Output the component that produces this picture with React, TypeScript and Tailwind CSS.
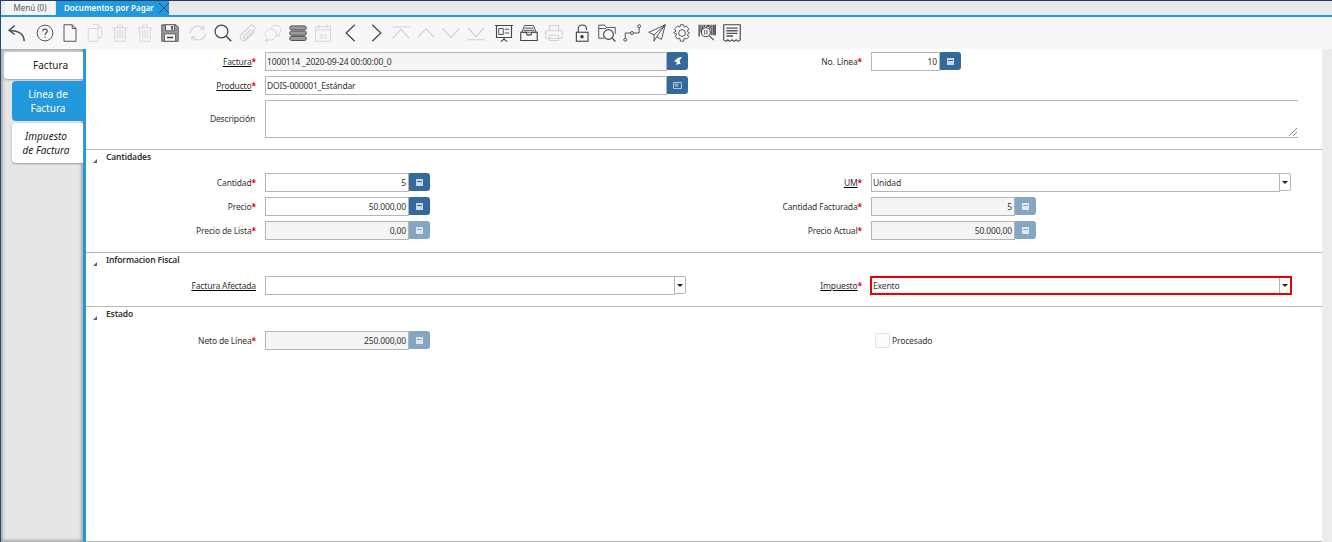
import type { ReactNode } from "react";

const font = "font-['Noto_Sans','Open_Sans',sans-serif]";
const small = "text-[8.5px] tracking-[-0.15px]";

function Icon({ children, off }: { children: ReactNode; off?: boolean }) {
  return (
    <div className="flex h-[25px] w-[25px] items-center justify-center">
      <svg
        viewBox="0 0 24 24"
        fill="none"
        stroke={off ? "#d2d2d2" : "#444"}
        strokeWidth="1.2"
        className="h-[18px] w-[18px]"
      >
        {children}
      </svg>
    </div>
  );
}

const group1 = [
  <Icon key="undo">
    <path d="M9 2 1.500 8.500 9 14M1.500 8.500c9 0 20 2 20 14.500" strokeWidth="2" stroke="#555" />
  </Icon>,
];

const group2 = [
  <Icon key="help">
    <circle cx="12" cy="12" r="10.500" />
    <path d="M9 9.500c0-3.800 6-3.800 6 0 0 2.500-3 2.500-3 5M12 16.500v1.800" strokeWidth="1.500" />
  </Icon>,
  <Icon key="new">
    <path d="M4 1h11l5 5v17H4zM15 1v5h5" />
  </Icon>,
  <Icon key="copy" off>
    <path d="M9 1h8l4 4v13h-5M16 1v4h5M3 6h13v17H3z" />
  </Icon>,
  <Icon key="delete" off>
    <path d="M2 5h20M9 5V1.500h6V5M4.500 5l1 18h13l1-18M9 8v12M12 8v12M15 8v12" />
  </Icon>,
  <Icon key="deleteAll" off>
    <path d="M2 5h20M9 5V1.500h6V5M4.500 5l1 18h13l1-18M9 8v12M12 8v12M15 8v12" />
  </Icon>,
  <Icon key="save">
    <path d="M1 1h19l3 3v19H1z" fill="#9a9a9a" stroke="#555" />
    <path d="M6 1h12v8H6z" fill="#f4f4f4" stroke="#555" />
    <path d="M13.500 2.500h2.500v5h-2.500z" fill="#555" stroke="none" />
    <path d="M4.500 13h15v10h-15z" fill="#f4f4f4" stroke="#555" />
    <path d="M8 18h8" stroke="#444" strokeWidth="2" />
  </Icon>,
];

const group3 = [
  <Icon key="refresh" off>
    <path d="M2 12C2 5 9 1 15.500 3.500L20 7M20 1.500V7h-5.500M22 12c0 7-7 11-13.500 8.500L4 17M4 22.500V17h5.500" strokeWidth="1.600" />
  </Icon>,
  <Icon key="find">
    <circle cx="10" cy="10" r="8.500" strokeWidth="1.600" />
    <path d="m16 16 7 7" strokeWidth="1.900" />
  </Icon>,
  <Icon key="attach" off>
    <path d="M21 10 10 21c-5 4-11-2-7-7L15 2.500c3.500-2.500 8 1.500 5 5L9 19c-1.500 1.500-4-.5-2.500-2.500L16 7" strokeWidth="1.500" />
  </Icon>,
  <Icon key="chat" off>
    <circle cx="9" cy="14" r="7.500" />
    <path d="M4 20l-2.500 3 5-1.500M10 5c2-4 8-4 11-1.500 3 3.500 1.500 8-2 10" />
    <path d="m19 13 2.500 3.500-5-1" />
  </Icon>,
  <Icon key="grid">
    <rect x="1" y="2.500" width="22" height="5.500" rx="2.500" fill="#9a9a9a" stroke="#444" />
    <rect x="1" y="9.500" width="22" height="5.500" rx="2.500" fill="#9a9a9a" stroke="#444" />
    <rect x="1" y="16.500" width="22" height="5.500" rx="2.500" fill="#9a9a9a" stroke="#444" />
  </Icon>,
  <Icon key="calendar" off>
    <path d="M2 3.500h20V23H2zM2 8h20M6.500 1v5M17.500 1v5" />
    <text x="12" y="20.500" fontSize="10" textAnchor="middle" fill="#cfcfcf" stroke="none">31</text>
  </Icon>,
];

const group4 = [
  <Icon key="prev">
    <path d="M17 1 5.500 12 17 23" strokeWidth="1.600" />
  </Icon>,
  <Icon key="next">
    <path d="M7 1 18.500 12 7 23" strokeWidth="1.600" />
  </Icon>,
  <Icon key="first" off>
    <path d="M0 4h24M1 19 12 7l11 12" strokeWidth="1.500" />
  </Icon>,
  <Icon key="up" off>
    <path d="M1 18 12 6l11 12" strokeWidth="1.500" />
  </Icon>,
  <Icon key="down" off>
    <path d="M1 6l11 12L23 6" strokeWidth="1.500" />
  </Icon>,
  <Icon key="last" off>
    <path d="M0 21h24M1 5l11 12L23 5" strokeWidth="1.500" />
  </Icon>,
];

const group5 = [
  <Icon key="report">
    <path d="M0 2h24M2 2v16h20V2M12 18v2M8 23.500l4-3.500 4 3.500" strokeWidth="1.500" />
    <path d="M5 6h6v8H5zM13 7h6M13 12h6" />
  </Icon>,
  <Icon key="archive">
    <path d="M6 2h12l3.500 9h-19z" />
    <path d="M1 11h7l1.500 3.500h5L16 11h7v11H1z" strokeWidth="1.500" />
    <path d="M6 5.500h12M5 8.500h14" />
  </Icon>,
  <Icon key="print" off>
    <path d="M6 9V2h12v7M1 9h22v10H1zM6 15h12v7H6z" strokeWidth="1.500" />
  </Icon>,
];

const group6 = [
  <Icon key="lock">
    <path d="M7 11V6.500c0-7 11-7 11 0V8" strokeWidth="1.500" />
    <rect x="4.500" y="11" width="15.500" height="12" strokeWidth="1.500" />
    <circle cx="12" cy="17" r="1.800" fill="#333" />
  </Icon>,
  <Icon key="zoom">
    <path d="M1 19V1.500h8l2 3h12V13M1 6h10M1 19h7" />
    <circle cx="14" cy="14" r="6.500" strokeWidth="1.500" />
    <path d="m19 19 4.500 4.500" strokeWidth="1.500" />
  </Icon>,
  <Icon key="workflow">
    <circle cx="3" cy="21" r="2" />
    <circle cx="12" cy="12" r="2" />
    <circle cx="21.500" cy="3" r="2" />
    <path d="M3 19v-7h7M14 12h7.500V5" />
  </Icon>,
  <Icon key="send">
    <path d="M23 1 1 11l7 3.500L23 1 11.500 17l6.500 3.500zM8 14.500V23l3.500-6" />
  </Icon>,
  <Icon key="gear">
    <path d="M10 1h4l1 3 3-1 3 3.500-2 3 3 2.500-3 2 2 3L18 20l-3-1-1 4h-4l-1-4-3 1-3-3.500 2-3L1 11.500l3-2-2-3L6 3l3 1z" />
    <circle cx="12" cy="12" r="4.500" />
  </Icon>,
  <Icon key="barcode">
    <path d="M1.500 1v16M4 1v10M6.500 1v6M16 1v6M18.500 1v14M21 1v14M23 1v14" strokeWidth="1.700" />
    <path d="M9 1v3M12 1v3M14 1v3" strokeWidth="1.700" />
    <circle cx="10.500" cy="11" r="6" strokeWidth="1.500" />
    <path d="M9 8v6M12 8v6" />
    <path d="m15 15.500 6 6" strokeWidth="1.500" />
  </Icon>,
  <Icon key="invoice">
    <path d="M1 1h22v20c-1.500 2.500-3.500 2.500-5.500 0-1.500 2.500-4 2.500-5.500 0-2 2.500-4 2.500-5.500 0C5 23.500 2.500 23.500 1 21z" strokeWidth="1.500" />
    <path d="M4.500 5.500h15M4.500 9h15M4.500 12.500h15M4.500 16h9" strokeWidth="1.700" stroke="#555" />
  </Icon>,
];

function Label({ text, link, req = true }: { text: string; link?: boolean; req?: boolean }) {
  return (
    <div className={`w-[170px] shrink-0 text-right leading-[19px] text-[#333] ${small}`}>
      <span className={link ? "underline decoration-black underline-offset-1" : ""}>{text}</span>
      {req && <span className="font-bold text-[#e00000]">*</span>}
    </div>
  );
}

function CalcIcon({ off }: { off?: boolean }) {
  return (
    <svg viewBox="0 0 7 7" className="h-[7px] w-[7px]">
      <rect width="7" height="7" fill={off ? "#dfe7ee" : "#cbd7e3"} />
      <rect x="1" y="2" width="5" height="1" fill={off ? "#85a6c3" : "#33699b"} />
    </svg>
  );
}

function CalcButton({ off, children }: { off?: boolean; children?: ReactNode }) {
  return (
    <div
      className={`flex h-[18px] w-[21px] shrink-0 items-center justify-center rounded-r-[3px] rounded-l-[1px] ${
        off ? "bg-[#85a6c3]" : "bg-[#33699b]"
      }`}
    >
      {children ?? <CalcIcon off={off} />}
    </div>
  );
}

function Input({ value, w, right, ro }: { value?: string; w: string; right?: boolean; ro?: boolean }) {
  return (
    <div
      className={`h-[19px] shrink-0 truncate border border-[#b5b5b5] pl-[1px] pr-[2px] leading-[17px] text-[#333] ${small} ${w} ${
        right ? "text-right" : ""
      } ${ro ? "bg-[#f5f5f5]" : "bg-white"}`}
    >
      {value}
    </div>
  );
}

function Arrow() {
  return (
    <div className="flex h-[18px] w-[11px] shrink-0 items-center justify-center rounded-r-[2px] border border-l-0 border-[#b5b5b5] bg-white">
      <div className="h-0 w-0 border-x-[3px] border-t-[3px] border-x-transparent border-t-[#222]" />
    </div>
  );
}

function Section({ title }: { title: string }) {
  return (
    <div className="flex h-[24px] items-start border-t border-[#b5b5b5] pl-[7px]">
      <svg viewBox="0 0 4 4" className="mt-[9px] h-[4px] w-[4px]">
        <path d="M4 0v4H0z" fill="#2e6aa8" />
      </svg>
      <span className={`ml-[9px] font-semibold leading-[14px] text-[#333] ${small}`}>{title}</span>
    </div>
  );
}

function Row({ children }: { children: ReactNode }) {
  return <div className="grid h-[19px] grid-cols-[606px_1fr]">{children}</div>;
}

function Cell({ children }: { children: ReactNode }) {
  return <div className="flex items-start">{children}</div>;
}

export default function App() {
  return (
    <div className={`flex h-[542px] w-[1332px] flex-col overflow-hidden border-l border-[#1f4a78] bg-white ${font}`}>
      {/* tabs */}
      <div className="flex h-[17px] shrink-0 border-b-[2px] border-t border-b-[#2299dd] border-t-[#1f3f66] bg-[#e9e9e9] pl-[4px]">
        <div className="w-[50px] bg-[#f5f5f5] text-center text-[8px] leading-[14px] text-[#555]">Menú (0)</div>
        <div className="ml-[1px] flex w-[113px] items-center bg-[#2299dd] pl-[8px] text-[8px] font-semibold text-white">
          <span className="w-[90px] whitespace-nowrap">Documentos por Pagar</span>
          <svg viewBox="0 0 10 10" className="ml-[5px] h-[10px] w-[10px]" stroke="#1b3a5c" strokeWidth="0.900">
            <path d="m0 0 10 10M10 0 0 10" />
          </svg>
        </div>
      </div>

      {/* toolbar */}
      <div className="flex h-[32px] shrink-0 items-center gap-[3px] bg-[#f7f7f7] pl-[3px]">
        <div className="flex">{group1}</div>
        <div className="flex">{group2}</div>
        <div className="flex">{group3}</div>
        <div className="flex">{group4}</div>
        <div className="flex">{group5}</div>
        <div className="flex">{group6}</div>
      </div>

      <div className="flex min-h-0 flex-1">
        {/* side tabs */}
        <div className="flex w-[85px] shrink-0 flex-col items-end border-r-[3px] border-[#2299dd] bg-[#e6e6e6] pt-[3px] text-[10px] text-[#222] shadow-[inset_3px_3px_3px_-1px_#aaa,inset_-3px_-3px_3px_-1px_#aaa]">
          <div className="h-[27px] w-[79px] rounded-l-[4px] bg-white pr-[15px] text-right leading-[27px] shadow-[0_1px_2px_#999]">
            Factura
          </div>
          <div className="mt-[2px] flex h-[40px] w-[71px] items-center justify-center rounded-l-[4px] bg-[#2299dd] pl-[1px] text-center leading-[14px] text-white">
            Línea de
            <br />
            Factura
          </div>
          <div className="mt-[2px] flex h-[40px] w-[71px] items-center justify-center rounded-l-[4px] bg-white pr-[3px] text-center italic leading-[14px] shadow-[0_1px_2px_#999]">
            Impuesto
            <br />
            de Factura
          </div>
        </div>

        {/* form */}
        <div className="flex min-w-0 flex-1 flex-col border-b border-[#b5b5b5] pt-[3px]">
          <Row>
            <Cell>
              <Label text="Factura" link />
              <div className="ml-[9px] flex">
                <Input value="1000114 _2020-09-24 00:00:00_0" w="w-[402px]" ro />
                <CalcButton>
                  <svg viewBox="0 0 10 8" className="h-[8px] w-[10px]" fill="#fff">
                    <path d="M9 0C6 0 3 2 1 4.500l3 .5-1 3c1.500-1 3-1 4.500-1L6.500 3.500z" />
                  </svg>
                </CalcButton>
              </div>
            </Cell>
            <Cell>
              <Label text="No. Línea" />
              <div className="ml-[9px] flex">
                <Input value="10" w="w-[69px]" right />
                <CalcButton />
              </div>
            </Cell>
          </Row>
          <div className="mt-[5px]">
            <Row>
              <Cell>
                <Label text="Producto" link />
                <div className="ml-[9px] flex">
                  <Input value="DOIS-000001_Estándar" w="w-[402px]" />
                  <CalcButton>
                    <svg viewBox="0 0 10 8" className="h-[7px] w-[9px]" fill="none" stroke="#cfdde9">
                      <path d="M.5.500h9v7h-9zM2 2.500h4M2 4.500h4" />
                    </svg>
                  </CalcButton>
                </div>
              </Cell>
            </Row>
          </div>
          <div className="mt-[5px] flex h-[38px]">
            <div className={`w-[170px] shrink-0 pr-[1px] pt-[9px] text-right leading-[19px] text-[#333] ${small}`}>Descripción</div>
            <div className="relative ml-[9px] h-[38px] w-[1033px] border-y border-l border-[#b5b5b5]">
              <svg viewBox="0 0 8 8" className="absolute bottom-[1px] right-[1px] h-[8px] w-[8px]" stroke="#555" strokeWidth="0.700">
                <path d="M0 8 8 0M4 8l4-4" />
              </svg>
            </div>
          </div>
          <div className="mt-[11px]">
            <Section title="Cantidades" />
          </div>
          <Row>
            <Cell>
              <Label text="Cantidad" />
              <div className="ml-[9px] flex">
                <Input value="5" w="w-[144px]" right />
                <CalcButton />
              </div>
            </Cell>
            <Cell>
              <Label text="UM" link />
              <div className="ml-[9px] flex">
                <Input value="Unidad" w="w-[409px]" />
                <Arrow />
              </div>
            </Cell>
          </Row>
          <div className="mt-[5px]">
            <Row>
              <Cell>
                <Label text="Precio" />
                <div className="ml-[9px] flex">
                  <Input value="50.000,00" w="w-[144px]" right />
                  <CalcButton />
                </div>
              </Cell>
              <Cell>
                <Label text="Cantidad Facturada" />
                <div className="ml-[9px] flex">
                  <Input value="5" w="w-[144px]" right ro />
                  <CalcButton off />
                </div>
              </Cell>
            </Row>
          </div>
          <div className="mt-[5px]">
            <Row>
              <Cell>
                <Label text="Precio de Lista" />
                <div className="ml-[9px] flex">
                  <Input value="0,00" w="w-[144px]" right ro />
                  <CalcButton off />
                </div>
              </Cell>
              <Cell>
                <Label text="Precio Actual" />
                <div className="ml-[9px] flex">
                  <Input value="50.000,00" w="w-[144px]" right ro />
                  <CalcButton off />
                </div>
              </Cell>
            </Row>
          </div>
          <div className="mt-[12px]">
            <Section title="Informacion Fiscal" />
          </div>
          <Row>
            <Cell>
              <Label text="Factura Afectada" link req={false} />
              <div className="ml-[9px] flex">
                <Input w="w-[410px]" />
                <Arrow />
              </div>
            </Cell>
            <Cell>
              <Label text="Impuesto" link />
              <div className="ml-[8px] flex h-[19px] w-[422px] items-center border-[2px] border-[#f00000] bg-white">
                <span className={`flex-1 pl-[1px] pt-[1px] text-[#333] ${small}`}>Exento</span>
                <div className="flex h-full w-[11px] items-center justify-center border-l border-[#b5b5b5]">
                  <div className="h-0 w-0 border-x-[3px] border-t-[3px] border-x-transparent border-t-[#222]" />
                </div>
              </div>
            </Cell>
          </Row>
          <div className="mt-[11px]">
            <Section title="Estado" />
          </div>
          <div className="mt-[1px]">
            <Row>
              <Cell>
                <Label text="Neto de Línea" />
                <div className="ml-[9px] flex">
                  <Input value="250.000,00" w="w-[144px]" right ro />
                  <CalcButton off />
                </div>
              </Cell>
              <div className="ml-[183px] flex h-[19px] items-center">
                <div className="h-[15px] w-[15px] rounded-[1px] border border-[#e2e2e2] bg-[#fbfbfb]" />
                <span className={`ml-[2px] pt-[1px] text-[#333] ${small}`}>Procesado</span>
              </div>
            </Row>
          </div>
        </div>

        {/* scrollbar */}
        <div className="w-[10px] shrink-0 bg-[#ececec]" />
      </div>
    </div>
  );
}
